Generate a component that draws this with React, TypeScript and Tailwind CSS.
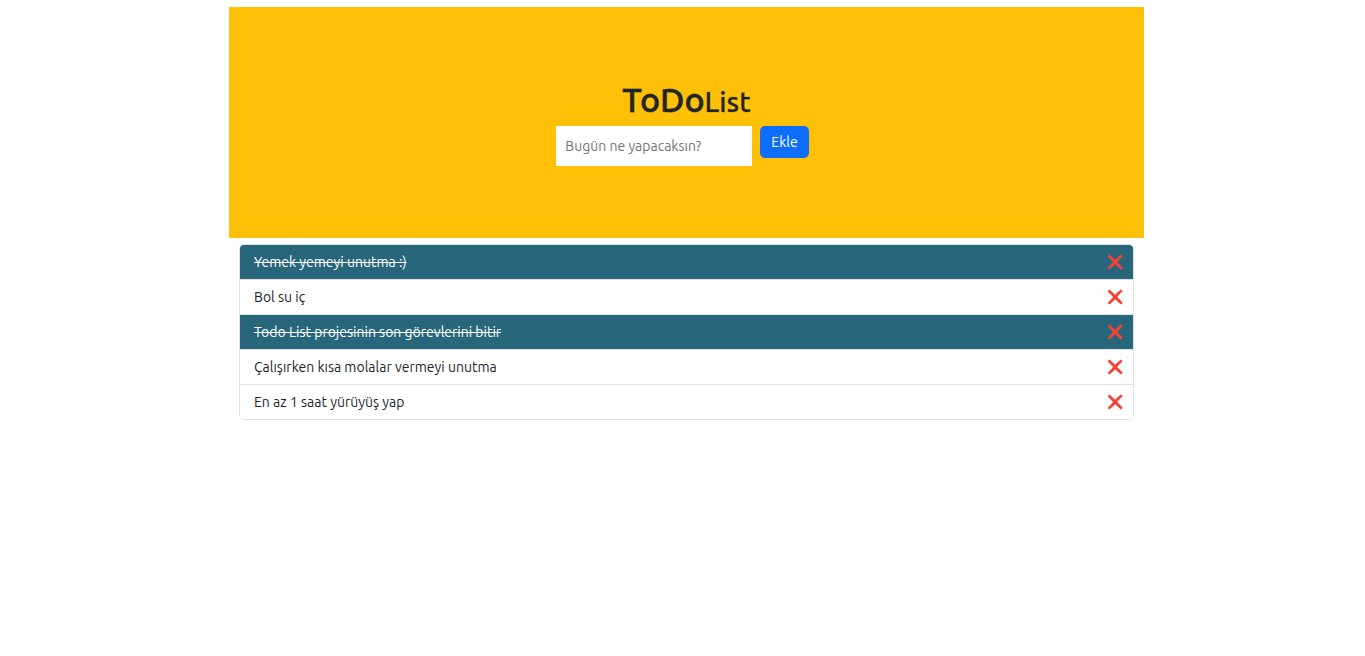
import { useState, type FormEvent } from "react";

type Todo = { id: number; text: string; done: boolean };

const initialTodos: Todo[] = [
  { id: 1, text: "Yemek yemeyi unutma :)", done: true },
  { id: 2, text: "Bol su iç", done: false },
  { id: 3, text: "Todo List projesinin son görevlerini bitir", done: true },
  { id: 4, text: "Çalışırken kısa molalar vermeyi unutma", done: false },
  { id: 5, text: "En az 1 saat yürüyüş yap", done: false },
];

function CrossIcon() {
  return (
    <svg viewBox="0 0 16 16" className="size-4" aria-hidden="true">
      <path
        d="M2.4 0.5 C4.7 2.3 6.5 4 8.1 5.8 C9.8 3.9 11.7 2.1 14 0.5 L15.7 1.9 C13.6 3.8 11.8 5.8 10.2 7.9 C12.1 9.7 13.9 11.6 15.7 13.8 L14.1 15.5 C12 13.7 10 12 8.2 10.2 C6.4 12.1 4.5 13.9 2.3 15.5 L0.6 14 C2.6 12.1 4.4 10.1 6.1 8 C4.4 6.2 2.5 4.3 0.6 2.2 Z"
        fill="#f44336"
      />
    </svg>
  );
}

export default function App() {
  const [todos, setTodos] = useState(initialTodos);
  const [draft, setDraft] = useState("");

  const addTodo = (event: FormEvent) => {
    event.preventDefault();
    const text = draft.trim();
    if (!text) return;
    setTodos([...todos, { id: Date.now(), text, done: false }]);
    setDraft("");
  };

  return (
    <div className="pt-[7px] pl-2 font-[Ubuntu,'Noto_Sans',sans-serif] text-sm text-[#212529]">
      <main className="mx-auto w-full max-w-[915px]">
        <header className="flex flex-col items-center bg-[#ffc107] px-4 pt-[73px] pb-[72px]">
          <h1 className="mb-2 text-[34px] leading-[38px] font-medium [-webkit-text-stroke:1px_#21252999]">
            ToDo
            <span className="text-[28px] leading-none [-webkit-text-stroke:1px_#21252940]">List</span>
          </h1>
          <form onSubmit={addTodo} className="flex items-start gap-2 pr-2">
            <input
              aria-label="Yeni görev"
              value={draft}
              onChange={(e) => setDraft(e.target.value)}
              placeholder="Bugün ne yapacaksın?"
              className="h-10 w-[196px] bg-white px-[9px] outline-none placeholder:text-[#757575]"
            />
            <button type="submit" className="h-8 rounded-[5px] bg-[#0d6efd] px-[11px] text-white">
              Ekle
            </button>
          </form>
        </header>
        <ul className="mx-[10px] mt-[6px] divide-y divide-[#dee2e6] overflow-hidden rounded-[5px] border border-[#dee2e6]">
          {todos.map((todo) => (
            <li
              key={todo.id}
              className={`flex h-[35px] items-center justify-between pr-[10px] pl-[14px] last:h-[34px] ${
                todo.done ? "bg-[#27667b] text-white line-through" : "bg-white"
              }`}
            >
              <span>{todo.text}</span>
              <button
                type="button"
                aria-label="Sil"
                onClick={() => setTodos(todos.filter((t) => t.id !== todo.id))}
              >
                <CrossIcon />
              </button>
            </li>
          ))}
        </ul>
      </main>
    </div>
  );
}
